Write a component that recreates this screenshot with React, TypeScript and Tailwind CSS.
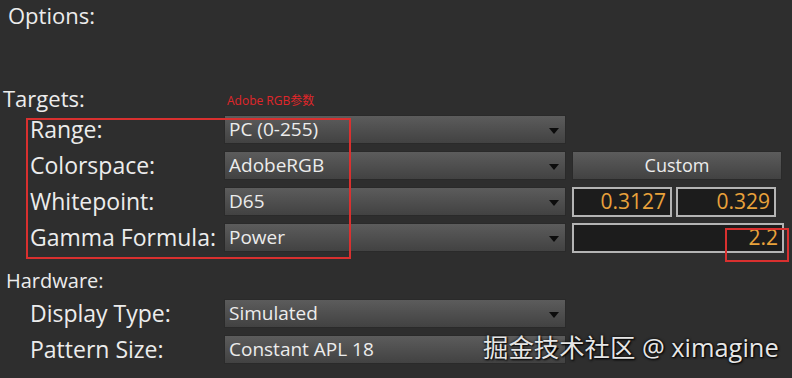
import { ReactNode } from 'react'

const font = { fontFamily: '"Open Sans", "Noto Sans", "Noto Sans CJK SC", sans-serif' }

function Dropdown({ value }: { value: string }) {
  return (
    <div className="relative flex h-[29px] w-[342px] items-center border border-[#2a2a2a] bg-gradient-to-b from-[#5c5c5c] to-[#424242] pl-[4px] text-[19px] text-[#ececec]">
      <span className="leading-none">{value}</span>
      <span className="absolute right-[6px] top-[12px] h-0 w-0 border-x-[5px] border-t-[6px] border-x-transparent border-t-[#0c0c0c]" />
    </div>
  )
}

function Row({ label, value, extra }: { label: string; value: string; extra?: ReactNode }) {
  return (
    <div className="flex h-[29px] items-center">
      <div className="w-[224px] pl-[30px] text-[23px] leading-none text-[#ececec]">{label}</div>
      <Dropdown value={value} />
      <div className="ml-[6px] flex">{extra}</div>
    </div>
  )
}

function NumBox({ value, w }: { value: string; w: string }) {
  return (
    <div
      className={`flex h-[30px] ${w} items-center justify-end border-2 border-[#b4b4b4] bg-[#1c1c1c] pr-[4px] text-[21px] leading-none text-[#e9a23b]`}
    >
      {value}
    </div>
  )
}

export default function App() {
  return (
    <div className="relative h-[378px] w-[792px] overflow-hidden bg-[#2e2e2e]" style={font}>
      <div className="pl-[8px] text-[22px] leading-[30px] text-[#ececec]">Options:</div>

      <div className="mt-[56px] pl-[3px] text-[22px] leading-[24px] text-[#ececec]">Targets:</div>

      <div className="mt-[5px] flex flex-col gap-[7px]">
        <Row label="Range:" value="PC (0-255)" />
        <Row
          label="Colorspace:"
          value="AdobeRGB"
          extra={
            <div className="flex h-[29px] w-[210px] items-center justify-center border border-[#2a2a2a] bg-gradient-to-b from-[#5c5c5c] to-[#424242] text-[18px] text-[#ececec]">
              Custom
            </div>
          }
        />
        <Row
          label="Whitepoint:"
          value="D65"
          extra={
            <div className="flex gap-[4px]">
              <NumBox value="0.3127" w="w-[100px]" />
              <NumBox value="0.329" w="w-[100px]" />
            </div>
          }
        />
        <Row label="Gamma Formula:" value="Power" extra={<NumBox value="2.2" w="w-[212px]" />} />
      </div>

      <div className="mt-[18px] pl-[6px] text-[20px] leading-[22px] text-[#ececec]">Hardware:</div>

      <div className="mt-[7px] flex flex-col gap-[7px]">
        <Row label="Display Type:" value="Simulated" />
        <Row label="Pattern Size:" value="Constant APL 18" />
      </div>

      {/* annotations */}
      <div className="absolute left-[227px] top-[92px] text-[12px] text-[#e0262a]">Adobe RGB参数</div>
      <div className="absolute left-[26px] top-[118px] h-[141px] w-[325px] border-2 border-[#d9302f]" />
      <div className="absolute left-[725px] top-[228px] h-[34px] w-[64px] border-2 border-[#d9302f]" />

      <div className="absolute left-[483px] top-[328px] text-[25.4px] text-[#e6e6e6] [text-shadow:0_0_3px_#000,1px_1px_2px_#000]">
        掘金技术社区 @ ximagine
      </div>
    </div>
  )
}
